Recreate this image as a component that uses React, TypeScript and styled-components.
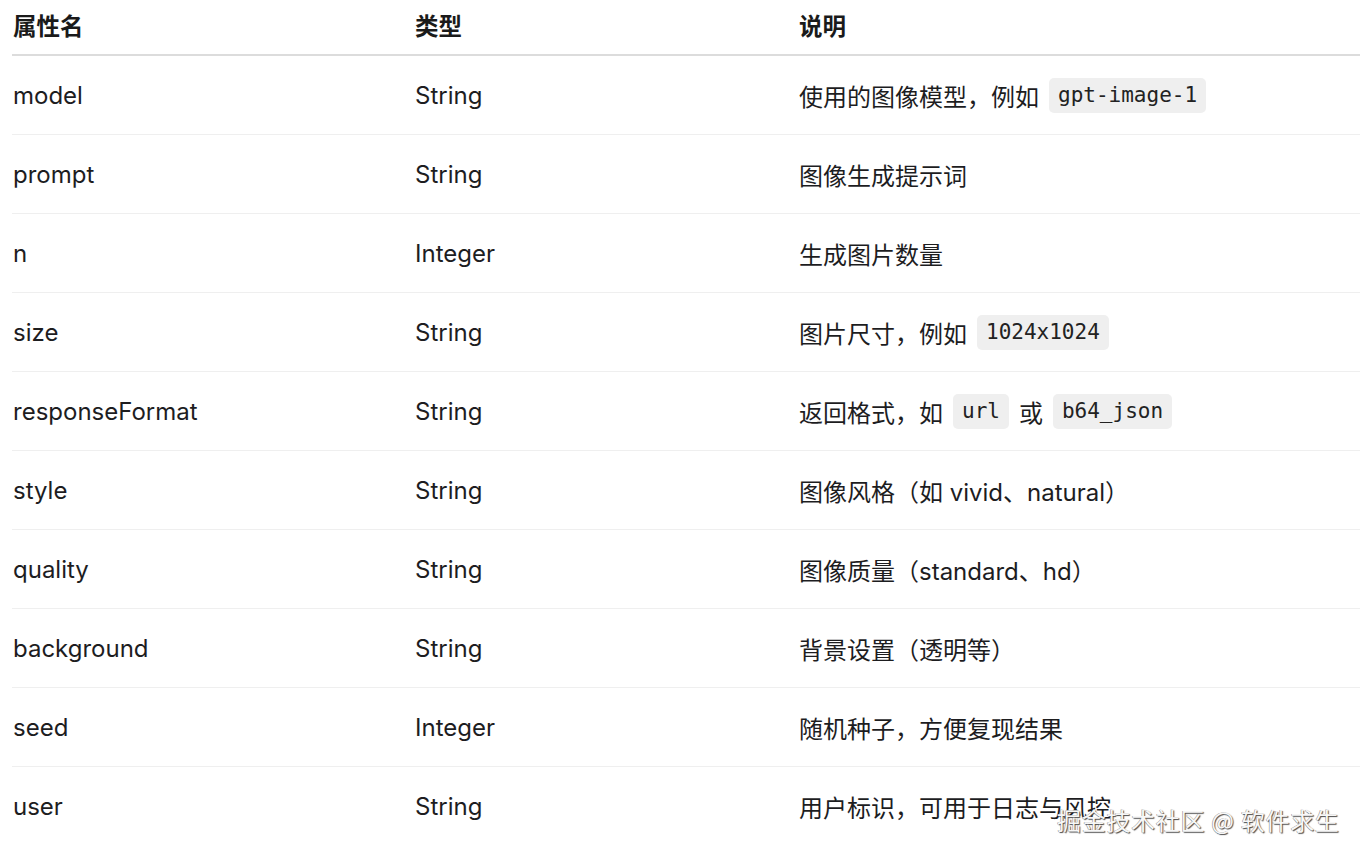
import React from "react";
import styled, { createGlobalStyle } from "styled-components";

const Global = createGlobalStyle`
  html, body { margin: 0; padding: 0; background: #ffffff; }
  body {
    font-family: Inter, "Noto Sans", "Noto Sans CJK SC", sans-serif;
    color: #1d1d1f;
  }
`;

const Page = styled.div`
  position: relative;
  width: 1366px;
  height: 859px;
  overflow: hidden;
  background: #fff;
`;

const Table = styled.div`
  margin-left: 12px;
  width: 1348px;
  display: grid;
  grid-template-columns: 402px 384px 1fr;
`;

const HeadCell = styled.div`
  box-sizing: border-box;
  height: 56px;
  display: flex;
  align-items: center;
  padding-left: 1px;
  padding-bottom: 5px;
  font-size: 23.5px;
  font-weight: 700;
  border-bottom: 2px solid #dcdcdc;
  font-family: "Noto Sans CJK SC", sans-serif;
  color: #1a1a1a;
`;

const Cell = styled.div<{ $last?: boolean }>`
  height: 78px;
  display: flex;
  align-items: center;
  padding-left: 1px;
  font-size: 24px;
  border-bottom: ${(p) => (p.$last ? "none" : "1px solid #efefef")};
  color: #1d1d1f;
  white-space: nowrap;
`;

const Code = styled.code`
  font-family: "DejaVu Sans Mono", "Liberation Mono", monospace;
  font-size: 21px;
  background: #efefef;
  border-radius: 5px;
  padding: 5px 9px 6px;
  margin: 0 10px 0 10px;
  color: #222;
`;

const Watermark = styled.div`
  position: absolute;
  left: 1057px;
  top: 802px;
  font-size: 24px;
  font-family: "Noto Sans CJK SC", sans-serif;
  color: #f7f7f7;
  text-shadow: 1px 1px 1px #4a4a4a, -0.5px -0.5px 0.5px #888;
  letter-spacing: 0.7px;
  white-space: nowrap;
`;

type Row = { name: string; type: string; desc: React.ReactNode };

const rows: Row[] = [
  { name: "model", type: "String", desc: <>使用的图像模型，例如<Code>gpt-image-1</Code></> },
  { name: "prompt", type: "String", desc: "图像生成提示词" },
  { name: "n", type: "Integer", desc: "生成图片数量" },
  { name: "size", type: "String", desc: <>图片尺寸，例如<Code>1024x1024</Code></> },
  {
    name: "responseFormat",
    type: "String",
    desc: <>返回格式，如<Code>url</Code>或<Code>b64_json</Code></>,
  },
  { name: "style", type: "String", desc: "图像风格（如 vivid、natural）" },
  { name: "quality", type: "String", desc: "图像质量（standard、hd）" },
  { name: "background", type: "String", desc: "背景设置（透明等）" },
  { name: "seed", type: "Integer", desc: "随机种子，方便复现结果" },
  { name: "user", type: "String", desc: "用户标识，可用于日志与风控" },
];

export default function App() {
  return (
    <Page>
      <Global />
      <Table>
        <HeadCell>属性名</HeadCell>
        <HeadCell>类型</HeadCell>
        <HeadCell>说明</HeadCell>
        {rows.map((r, i) => {
          const last = i === rows.length - 1;
          return (
            <React.Fragment key={r.name}>
              <Cell $last={last}>{r.name}</Cell>
              <Cell $last={last}>{r.type}</Cell>
              <Cell $last={last}>{r.desc}</Cell>
            </React.Fragment>
          );
        })}
      </Table>
      <Watermark>掘金技术社区 @ 软件求生</Watermark>
    </Page>
  );
}
